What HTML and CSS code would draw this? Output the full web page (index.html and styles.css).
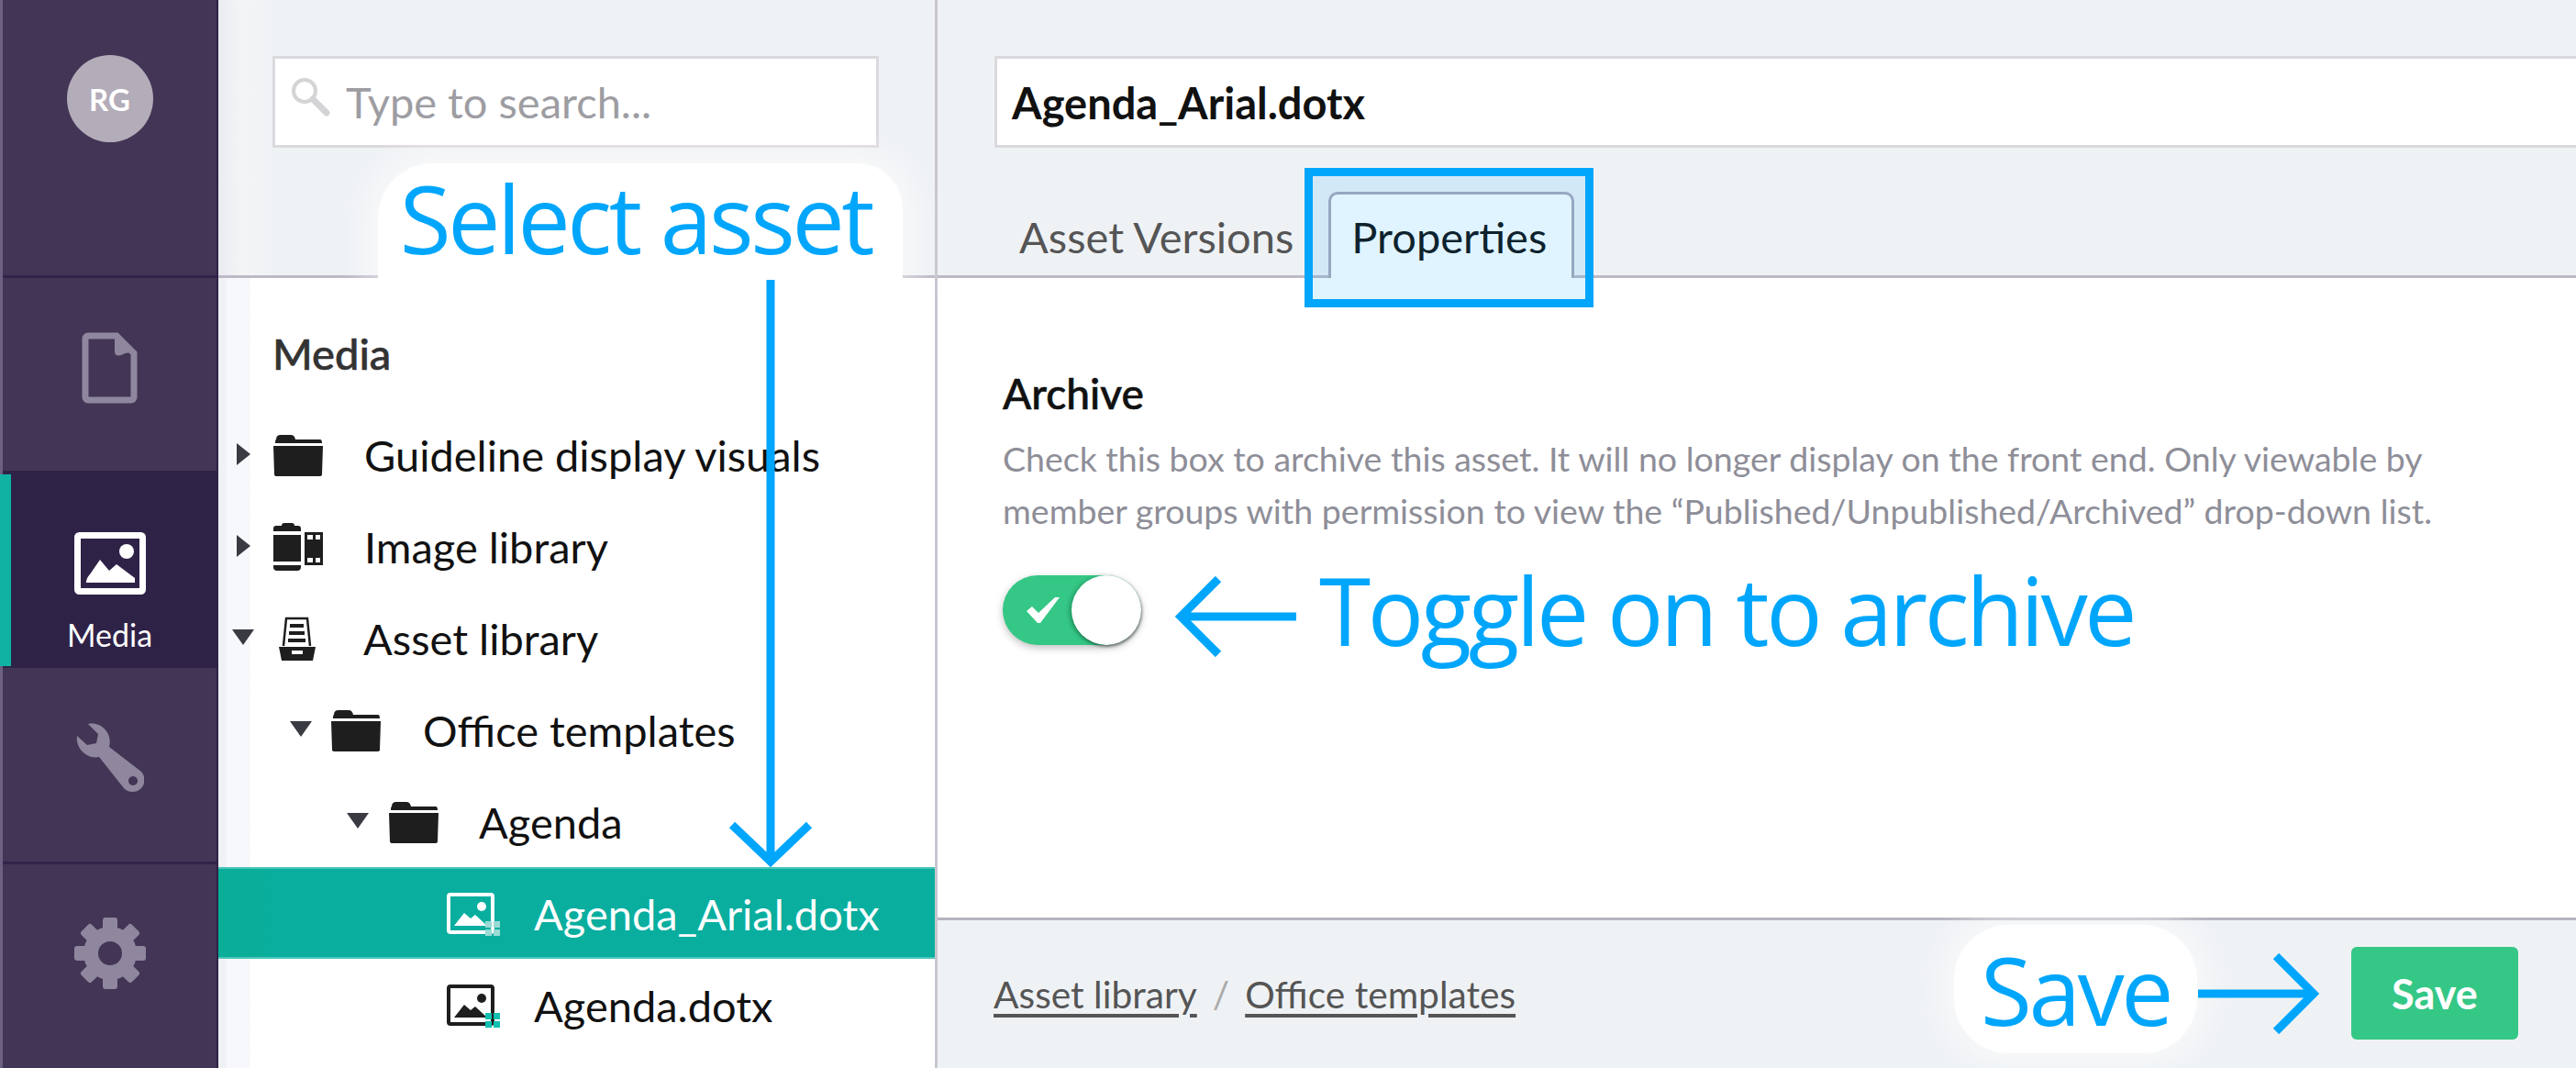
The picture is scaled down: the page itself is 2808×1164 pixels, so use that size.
FILE: index.html
```html
<!DOCTYPE html>
<html lang="en">
<head>
<meta charset="utf-8">
<title>Media</title>
<link rel="stylesheet" href="styles.css">
</head>
<body>
<div class="app">
  <nav class="nav">
    <div class="nav-top"><div class="avatar">RG</div></div>
    <a class="nav-item nav-doc">
      <svg width="61" height="78" viewBox="0 0 61 78"><path class="nav-line" d="M4 7a3 3 0 0 1 3-3H38L57 23V71a3 3 0 0 1-3 3H7a3 3 0 0 1-3-3Z"/><path class="nav-fill" d="M36 4 57 23Q50 21 43 25 36 27 36 21Z"/></svg>
    </a>
    <a class="nav-item nav-media">
      <svg width="78" height="68" viewBox="0 0 78 68"><rect x="3.5" y="3.500" width="71" height="61" rx="2" fill="none" stroke="#fff" stroke-width="7"/><circle cx="57" cy="21" r="8" fill="#fff"/><path fill="#fff" d="M13 55Q13 50 17 46L28 30 38 42 46 35 66 50V55Z"/></svg>
      <span>Media</span>
    </a>
    <a class="nav-item nav-tools">
      <svg width="74" height="76" viewBox="0 0 74 76"><path class="nav-fill" fill-rule="evenodd" d="M13 1 24 12 22 22 12 24 1 14C-1 28 12 40 25 37L52 71A13 13 0 0 0 71 53L36 26C40 12 28-2 13 1ZM62 58a5 5 0 1 0 .01 0Z"/></svg>
    </a>
    <a class="nav-item nav-gear">
      <svg width="78" height="78" viewBox="-39 -39 78 78"><circle class="nav-ring" r="21"/><g class="nav-fill"><rect x="-8" y="-39" width="16" height="14" rx="3"/><rect x="-8" y="-39" width="16" height="14" rx="3" transform="rotate(45)"/><rect x="-8" y="-39" width="16" height="14" rx="3" transform="rotate(90)"/><rect x="-8" y="-39" width="16" height="14" rx="3" transform="rotate(135)"/><rect x="-8" y="-39" width="16" height="14" rx="3" transform="rotate(180)"/><rect x="-8" y="-39" width="16" height="14" rx="3" transform="rotate(225)"/><rect x="-8" y="-39" width="16" height="14" rx="3" transform="rotate(270)"/><rect x="-8" y="-39" width="16" height="14" rx="3" transform="rotate(315)"/></g></svg>
    </a>
  </nav>

  <aside class="side">
    <header class="side-head">
      <div class="search">
        <svg width="44" height="44" viewBox="0 0 44 44"><circle cx="15" cy="15" r="12" fill="none" stroke="#d4d4d6" stroke-width="4"/><path d="M24 24 39 39" stroke="#d4d4d6" stroke-width="7" stroke-linecap="round"/></svg>
        <span>Type to search...</span>
      </div>
    </header>
    <section class="tree">
      <h2 class="tree-title">Media</h2>
      <div class="row lvl0"><i class="caret right"></i>
        <svg class="ic" width="54" height="45" viewBox="0 0 54 45"><path d="M3 5Q3 0 8 0H19Q23 0 24 5H51Q53 5 53 9H2Q2 5 3 5ZM0 12H54L53 43Q53 45 50 45H4Q1 45 1 43Z"/></svg>
        <span>Guideline display visuals</span></div>
      <div class="row lvl0"><i class="caret right"></i>
        <svg class="ic" width="54" height="52" viewBox="0 0 54 52"><path d="M9 3Q9 0 12 0H20Q23 0 23 3H27Q30 3 30 6V9H0V6Q0 3 3 3ZM0 13H30V42H0ZM0 46H30V48Q30 52 26 52H4Q0 52 0 48ZM34 10H54V46H34Z"/><path fill="#fff" d="M37 13H43V18H37ZM46 13H51V18H46ZM37 38H43V43H37ZM46 38H51V43H46Z"/></svg>
        <span>Image library</span></div>
      <div class="row lvl0"><i class="caret down"></i>
        <svg class="ic cab" width="40" height="48" viewBox="0 0 40 48"><path d="M5 32 8 2H31L34 32" fill="none" stroke="#1e1e1e" stroke-width="2.500"/><path d="M12 8H27V12H12ZM11 16H28V20H11ZM10 24H29V28H10ZM0 33H40L37 48H3Z"/><path fill="#fff" d="M14 37H26V41H14Z"/></svg>
        <span>Asset library</span></div>
      <div class="row lvl1"><i class="caret down"></i>
        <svg class="ic" width="54" height="45" viewBox="0 0 54 45"><path d="M3 5Q3 0 8 0H19Q23 0 24 5H51Q53 5 53 9H2Q2 5 3 5ZM0 12H54L53 43Q53 45 50 45H4Q1 45 1 43Z"/></svg>
        <span>Office templates</span></div>
      <div class="row lvl2"><i class="caret down"></i>
        <svg class="ic" width="54" height="45" viewBox="0 0 54 45"><path d="M3 5Q3 0 8 0H19Q23 0 24 5H51Q53 5 53 9H2Q2 5 3 5ZM0 12H54L53 43Q53 45 50 45H4Q1 45 1 43Z"/></svg>
        <span>Agenda</span></div>
      <div class="row lvl3 active"><i class="caret none"></i>
        <svg class="ic file" width="59" height="47" viewBox="0 0 59 47"><rect x="2" y="2" width="48" height="41" rx="2" fill="none" stroke="currentColor" stroke-width="4"/><circle cx="38" cy="15" r="5" fill="currentColor"/><path fill="currentColor" d="M8 36 19 22 26 28 31 24 44 36Z"/><path class="dots" d="M42 31H49V38H42ZM51 31H58V38H51ZM42 40H49V47H42ZM51 40H58V47H51Z"/></svg>
        <span>Agenda_Arial.dotx</span></div>
      <div class="row lvl3"><i class="caret none"></i>
        <svg class="ic file" width="59" height="47" viewBox="0 0 59 47"><rect x="2" y="2" width="48" height="41" rx="2" fill="none" stroke="currentColor" stroke-width="4"/><circle cx="38" cy="15" r="5" fill="currentColor"/><path fill="currentColor" d="M8 36 19 22 26 28 31 24 44 36Z"/><path class="dots" d="M42 31H49V38H42ZM51 31H58V38H51ZM42 40H49V47H42ZM51 40H58V47H51Z"/></svg>
        <span>Agenda.dotx</span></div>
    </section>
  </aside>

  <main class="main">
    <header class="main-head">
      <div class="title-input">Agenda_Arial.dotx</div>
      <div class="tabs">
        <span class="tab">Asset Versions</span>
        <span class="tab tab-on">Properties</span>
      </div>
    </header>
    <section class="body">
      <h3 class="prop-title">Archive</h3>
      <p class="prop-desc">Check this box to archive this asset. It will no longer display on the front end. Only viewable by<br>member groups with permission to view the “Published/Unpublished/Archived” drop-down list.</p>
      <div class="toggle">
        <svg width="40" height="36" viewBox="0 0 40 36"><path d="M2 19 8 14 15 21 33 4 38 4 17 32 14 32Z" fill="#fff"/></svg>
        <b class="knob"></b>
      </div>
    </section>
    <footer class="foot">
      <div class="crumbs"><a>Asset library</a><em>/</em><a>Office templates</a></div>
      <button class="save">Save</button>
    </footer>
  </main>
</div>

<div class="note blob blob-select"><span class="note-text">Select asset</span></div>
<svg class="note arrow-down" width="96" height="640" viewBox="0 0 96 640"><path d="M48 0V634M6 594 48 634 90 594" fill="none" stroke="#00a6fb" stroke-width="9"/></svg>
<div class="note hilite"></div>
<svg class="note arrow-left" width="132" height="88" viewBox="0 0 132 88"><path d="M132 44H6M47 3 6 44 47 85" fill="none" stroke="#00a6fb" stroke-width="9"/></svg>
<div class="note note-text toggle-note">Toggle on to archive</div>
<div class="note blob blob-save"><span class="note-text">Save</span></div>
<svg class="note arrow-right" width="132" height="88" viewBox="0 0 132 88"><path d="M0 44H126M85 3 126 44 85 85" fill="none" stroke="#00a6fb" stroke-width="9"/></svg>
</body>
</html>
```

FILE: styles.css
```css
* { box-sizing: border-box; }
html, body { margin: 0; height: 1164px; overflow: hidden; background: #fff; }
body { font-family: Lato, "Liberation Sans", sans-serif; color: #111; position: relative; }
.app { display: flex; height: 1164px; width: 2808px; }

/* nav */
.nav { width: 238px; flex: none; background: #423555; display: flex; flex-direction: column; border-left: 3px solid #6c6180; border-right: 2px solid #2f2247; }
.nav-top { height: 303px; flex: none; border-bottom: 3px solid #30244a; display: flex; justify-content: center; padding-top: 60px; }
.avatar { width: 94px; height: 95px; border-radius: 50%; background: #b3acb9; color: #fff; font-size: 33px; font-weight: 700; display: flex; align-items: center; justify-content: center; }
.nav-item { display: flex; flex-direction: column; align-items: center; flex: none; position: relative; }
.nav-doc { height: 210px; padding-top: 59px; }
.nav-media { height: 215px; padding-top: 67px; background: #2f2247; color: #fff; font-size: 34px; }
.nav-media::before { content: ""; position: absolute; left: -3px; top: 4px; bottom: 2px; width: 12px; background: #10b2a4; }
.nav-media span { margin-top: 22px; line-height: 44px; }
.nav-tools { height: 214px; padding-top: 60px; border-bottom: 3px solid #30244a; }
.nav-gear { flex: 1; padding-top: 58px; }
.nav-line { fill: none; stroke: #8e879e; stroke-width: 7; }
.nav-fill { fill: #8e879e; }
.nav-ring { fill: none; stroke: #8e879e; stroke-width: 16; }

/* side */
.side { width: 784px; flex: none; border-right: 3px solid #c9c6d0; display: flex; flex-direction: column; }
.side-head { height: 303px; flex: none; background: linear-gradient(90deg, #e9ebef 0, #f3f4f6 24px, #eff2f5 60px); border-bottom: 3px solid #bdb9c6; padding: 61px 0 0 59px; }
.search { width: 661px; height: 100px; background: #fff; border: 3px solid #dcd9de; display: flex; align-items: center; padding-left: 17px; gap: 16px; color: #9d9da2; font-size: 47px; }
.search svg { margin-top: -10px; }
.tree { flex: 1; background: linear-gradient(90deg, #eff1f5 0, #eff1f5 8px, #f7f8fb 9px, #f7f8fb 34px, #fff 35px); }
.tree-title { margin: 0; height: 142px; padding: 55px 0 0 59px; font-size: 47px; line-height: 54px; font-weight: 500; color: #333; -webkit-text-stroke: .6px #333; }
.row { height: 100px; display: flex; align-items: center; font-size: 47px; color: #111; position: relative; }
.row span { white-space: nowrap; margin-top: 2px; }
.caret { width: 0; height: 0; flex: none; display: block; }
.caret.right { border-left: 15px solid #393a42; border-top: 12px solid transparent; border-bottom: 12px solid transparent; margin-left: 20px; }
.caret.down { border-top: 17px solid #393a42; border-left: 12px solid transparent; border-right: 12px solid transparent; margin-top: -2px; }
.ic { flex: none; fill: #1e1e1e; margin-top: 2px; }
.lvl0 .caret.right + .ic { margin-left: 25px; }
.lvl0 .caret.right ~ span { margin-left: 45px; }
.lvl0 .caret.down { margin-left: 15px; }
.lvl0 .caret.down + .ic { margin-left: 27px; }
.lvl0 .caret.down ~ span { margin-left: 52px; }
.lvl1 .caret { margin-left: 78px; }
.lvl1 .ic { margin-left: 21px; }
.lvl1 span { margin-left: 46px; }
.lvl2 .caret { margin-left: 140px; }
.lvl2 .ic { margin-left: 22px; }
.lvl2 span { margin-left: 44px; }
.lvl3 .ic { margin-left: 249px; color: #1e1e1e; fill: none; }
.lvl3 span { margin-left: 36px; }
.dots { fill: #10bfb0; }
.active { background: linear-gradient(90deg, #0aae98 0, #0aae98 42px, #09ae9f 60px); color: #fff; box-shadow: inset 0 2px 0 #4cc5ba, inset 0 -2px 0 #4cc5ba; }
.active .ic { color: #fff; }
.active .dots { fill: #9adbd5; }

/* main */
.main { flex: 1; min-width: 0; display: flex; flex-direction: column; overflow: hidden; }
.main-head { height: 303px; flex: none; background: #eff2f5; border-bottom: 3px solid #bdb9c6; padding: 61px 0 0 62px; display: flex; flex-direction: column; }
.title-input { height: 100px; margin-right: -6px; background: #fff; border: 3px solid #dcd9de; font-size: 47px; font-weight: 700; line-height: 96px; padding-left: 16px; color: #111; }
.tabs { display: flex; align-items: flex-end; height: 139px; margin-top: 0; padding-left: 27px; }
.tab { font-size: 47px; line-height: 56px; padding-bottom: 14px; color: #555; }
.tab-on { margin-left: 38px; height: 94px; width: 268px; margin-bottom: -3px; padding: 18px 5px 0 0; text-align: center; background: #fff; border: 3px solid #a9a9b8; border-bottom: 0; border-radius: 10px 10px 0 0; color: #111; }
.body { flex: 1; background: #fff; padding: 0 0 0 71px; }
.prop-title { margin: 0; padding-top: 99px; font-size: 46px; line-height: 54px; font-weight: 500; -webkit-text-stroke: .6px #111; color: #111; }
.prop-desc { margin: 15px 0 0; font-size: 37.500px; line-height: 57px; color: #8e8e98; }
.toggle { margin-top: 42px; width: 151px; height: 76px; border-radius: 38px; background: #35c786; box-shadow: 0 3px 8px rgba(0,0,0,.25); position: relative; padding: 20px 0 0 24px; }
.toggle svg { display: block; }
.knob { position: absolute; right: 0; top: 0; width: 76px; height: 76px; border-radius: 50%; background: #fff; box-shadow: -3px 1px 4px rgba(0,80,40,.3), 1px 2px 3px rgba(0,0,0,.4); }
.foot { height: 164px; flex: none; background: #eff2f5; border-top: 3px solid #b7b4c0; display: flex; align-items: center; justify-content: space-between; padding: 0 63px 0 61px; }
.crumbs { display: flex; align-items: center; font-size: 40.700px; color: #555; }
.crumbs a { text-decoration: underline; text-underline-offset: 6px; }
.crumbs em { margin: 0 17px; color: #aaa; font-style: normal; }
.save { width: 182px; height: 101px; margin-top: -2px; border: 0; border-radius: 6px; background: #35c786; color: #fff; font: 700 45px Lato, sans-serif; }

/* annotations over the page */
.note { position: absolute; }
.note-text { font-family: "Open Sans", sans-serif; color: #00a6fb; white-space: nowrap; font-weight: 400; font-size: 102px; letter-spacing: -3.400px; }
.blob { background: #fff; box-shadow: 0 0 30px 16px rgba(255,255,255,.45); display: flex; align-items: center; justify-content: center; }
.blob-select { left: 412px; top: 178px; width: 572px; height: 128px; padding: 0 10px 10px 0; border-radius: 60px 50px 0 0 / 60px 50px 0 0; }
.blob-save { left: 2130px; top: 1008px; width: 265px; height: 140px; border-radius: 60px; }
.arrow-down { left: 792px; top: 305px; }
.hilite { left: 1422px; top: 183px; width: 315px; height: 152px; border: 9px solid #00a6fb; background: rgba(0,166,251,.12); }
.arrow-left { left: 1281px; top: 628px; }
.arrow-right { left: 2396px; top: 1039px; }
.toggle-note { left: 1438px; top: 595px; line-height: 140px; }
```
